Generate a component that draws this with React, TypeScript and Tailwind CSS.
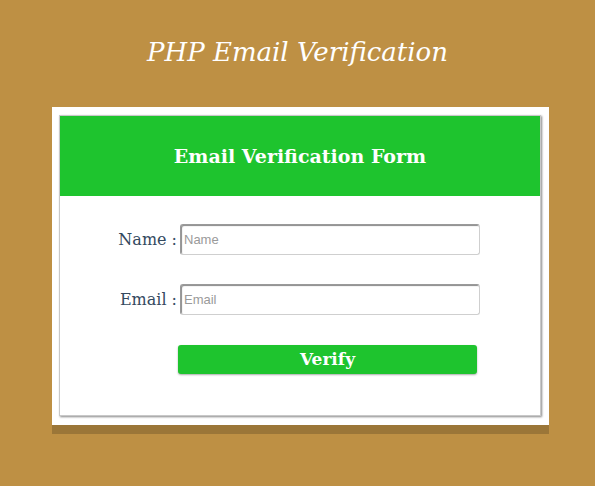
export default function App() {
  return (
    <div className="min-h-[486px] bg-[#BE9044] flex flex-col items-center pl-[6px] font-['DejaVu_Serif',serif]">
      {/* Page title */}
      <h1 className="mt-[34px] -ml-[6px] text-[26px] leading-[36px] italic text-white">
        PHP Email Verification
      </h1>

      {/* Outer frame */}
      <div className="mt-[37px] w-[497px] bg-white pl-[7px] pr-[8px] pt-[8px] pb-[9px] border-b-[9px] border-[#9B7638]">
        <div className="border border-[#c8c8c8] shadow-[1px_1px_2px_#888] bg-white">
          {/* Header */}
          <div className="h-[80px] bg-[#1EC42E] flex items-center justify-center">
            <h2 className="text-[19px] font-bold text-white">
              Email Verification Form
            </h2>
          </div>

          {/* Form */}
          <form className="pt-[28px] pb-[41px] flex flex-col">
            <div className="flex items-center pl-[44px]">
              <label className="w-[76px] text-right pr-[3px] text-[16px] text-[#34495e]">
                Name :
              </label>
              <input
                type="text"
                placeholder="Name"
                className="w-[300px] h-[31px] border border-[#cfcfcf] border-t-[#9a9a9a] border-l-[#9a9a9a] rounded-[3px] shadow-[inset_1px_1px_1px_#8a8a8a] px-[3px] text-[13px] font-['Liberation_Sans',sans-serif] placeholder:text-[#9a9a9a] outline-none"
              />
            </div>
            <div className="flex items-center pl-[44px] mt-[29px]">
              <label className="w-[76px] text-right pr-[3px] text-[16px] text-[#34495e]">
                Email :
              </label>
              <input
                type="text"
                placeholder="Email"
                className="w-[300px] h-[31px] border border-[#cfcfcf] border-t-[#9a9a9a] border-l-[#9a9a9a] rounded-[3px] shadow-[inset_1px_1px_1px_#8a8a8a] px-[3px] text-[13px] font-['Liberation_Sans',sans-serif] placeholder:text-[#9a9a9a] outline-none"
              />
            </div>
            <button
              type="button"
              className="ml-[118px] mt-[30px] w-[299px] h-[29px] bg-[#1EC42E] rounded-[3px] shadow-[0_1px_2px_#aaa] text-white text-[17px] font-bold leading-none"
            >
              Verify
            </button>
          </form>
        </div>
      </div>
    </div>
  );
}
